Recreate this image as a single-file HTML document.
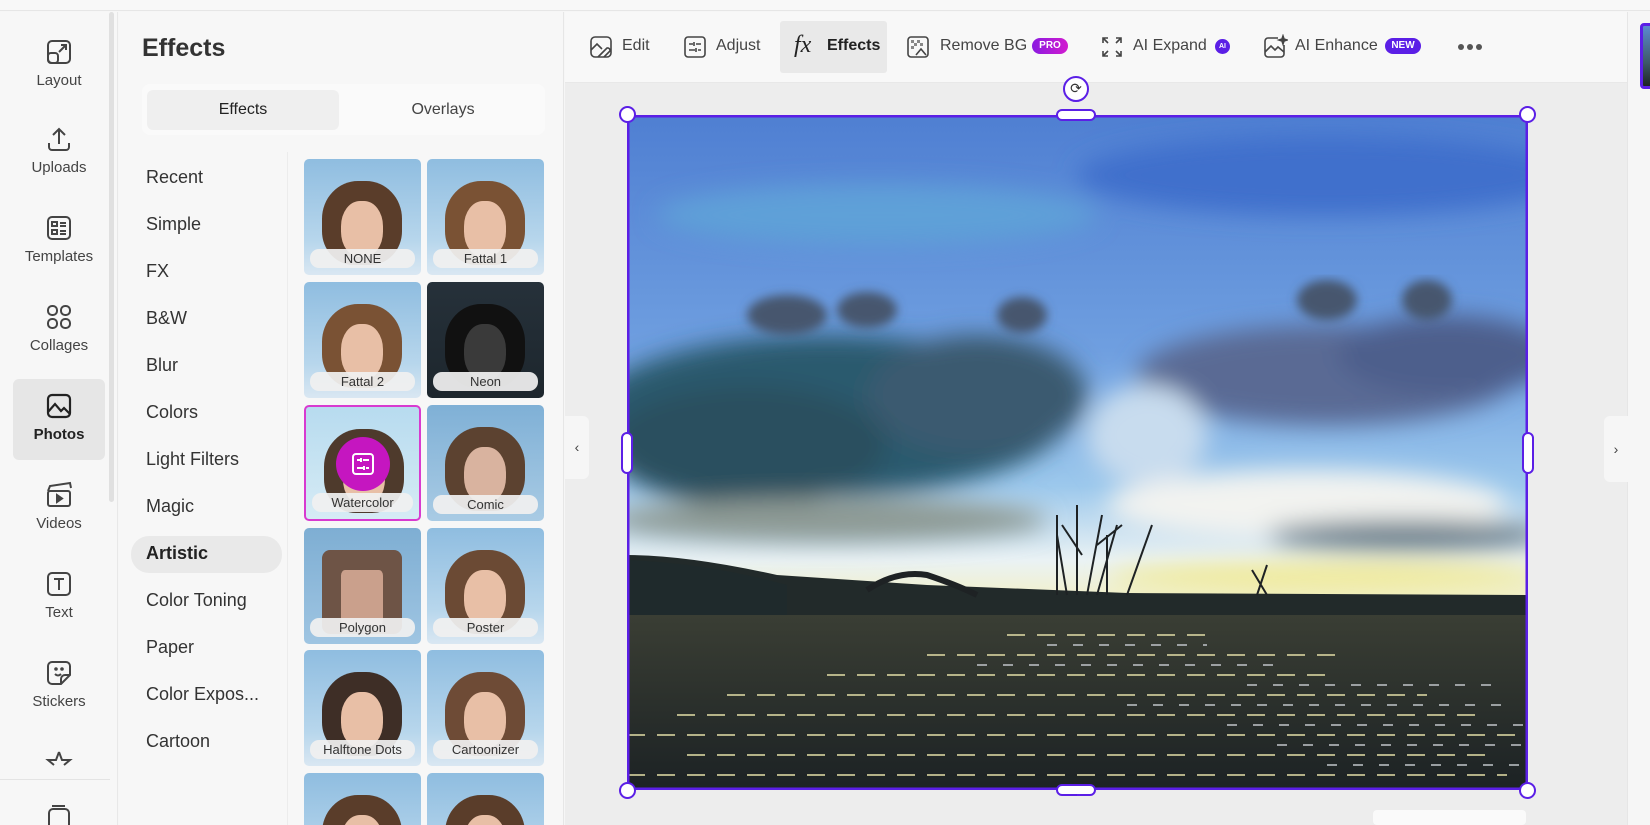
<!DOCTYPE html>
<html><head><meta charset="utf-8"><style>
*{box-sizing:border-box;margin:0;padding:0}
html,body{width:1650px;height:825px;overflow:hidden}
body{background:#f6f6f6;font-family:"Liberation Sans",sans-serif;color:#333}
#wrap{position:relative;width:1650px;height:825px;overflow:hidden}
.abs{position:absolute}
.topline{left:0;top:0;width:1650px;height:11px;background:#f8f8f8;border-bottom:1px solid #e6e6e6}
.side{left:0;top:12px;width:118px;height:813px;background:#f7f7f7;border-right:1px solid #e8e8e8}
.si{position:absolute;left:0;width:118px;text-align:center;font-size:15px;color:#444}
.si svg{display:block;margin:0 auto 6px}
.scroll{left:109px;top:12px;width:5px;height:490px;background:#e0e0e0;border-radius:3px}
.panel{left:119px;top:12px;width:445px;height:813px;background:#f7f7f7;border-right:1px solid #e6e6e6}
.cat{position:absolute;left:146px;font-size:18px;color:#333}
.th{position:absolute;width:117px;height:116px;border-radius:5px;overflow:hidden;background:linear-gradient(180deg,#8fbde0,#b7d6ec 70%,#d9e7f2)}
.th .hair{position:absolute;left:18px;top:22px;width:80px;height:84px;border-radius:45% 45% 40% 40%;background:#5a3d2a}
.th .face{position:absolute;left:37px;top:42px;width:42px;height:56px;border-radius:45%;background:#e8bfa6}
.th .lbl{position:absolute;left:6px;right:6px;bottom:7px;height:19px;border-radius:9px;background:rgba(240,240,240,.93);font-size:13px;text-align:center;line-height:19px;color:#333}
.tb{position:absolute;top:34px;font-size:16px;color:#444;height:24px;line-height:24px}
.badge{position:absolute;color:#fff;font-size:10px;font-weight:bold;text-align:center;border-radius:8px;height:16px;line-height:16px}
.canvas{left:565px;top:83px;width:1062px;height:742px;background:#ededed}
.handle{position:absolute;width:17px;height:17px;border-radius:50%;background:#fff;border:2.5px solid #5b1fe6}
</style></head><body><div id="wrap">
<div class="abs topline"></div>
<div class="abs side"></div>
<div class="abs" style="left:13px;top:379px;width:92px;height:81px;background:#e6e6e6;border-radius:6px"></div>
<div class="abs scroll"></div>

<div class="si" style="top:38px"><svg width="28" height="28" viewBox="0 0 28 28" fill="none" stroke="#444" stroke-width="2"><rect x="3" y="3" width="22" height="22" rx="4"/><rect x="3" y="15" width="10" height="10" rx="3"/><path d="M14 14l7-7M16 7h5v5"/></svg>Layout</div>
<div class="si" style="top:125px"><svg width="28" height="28" viewBox="0 0 28 28" fill="none" stroke="#444" stroke-width="2"><path d="M14 4v15M8 10l6-6 6 6M4 18v4a3 3 0 003 3h14a3 3 0 003-3v-4"/></svg>Uploads</div>
<div class="si" style="top:214px"><svg width="28" height="28" viewBox="0 0 28 28" fill="none" stroke="#444" stroke-width="2"><rect x="3" y="3" width="22" height="22" rx="4"/><rect x="7" y="8" width="5" height="4"/><rect x="7" y="16" width="5" height="4"/><path d="M15 9h6M15 12h6M15 17h6M15 20h6"/></svg>Templates</div>
<div class="si" style="top:303px"><svg width="28" height="28" viewBox="0 0 28 28" fill="none" stroke="#444" stroke-width="2"><rect x="3" y="3" width="9" height="9" rx="4"/><rect x="16" y="3" width="9" height="9" rx="4"/><rect x="3" y="16" width="9" height="9" rx="4"/><rect x="16" y="16" width="9" height="9" rx="4"/></svg>Collages</div>
<div class="si" style="top:392px;color:#222;font-weight:bold"><svg width="28" height="28" viewBox="0 0 28 28" fill="none" stroke="#222" stroke-width="2.2"><rect x="3" y="3" width="22" height="22" rx="4"/><path d="M3 20l7-8 6 7 3-3 6 6"/></svg>Photos</div>
<div class="si" style="top:481px"><svg width="28" height="28" viewBox="0 0 28 28" fill="none" stroke="#444" stroke-width="2"><rect x="3" y="10" width="22" height="15" rx="2"/><path d="M3 10l2-5 20-3 1 5"/><path d="M12 14v7l5-3.5z" fill="#444"/></svg>Videos</div>
<div class="si" style="top:570px"><svg width="28" height="28" viewBox="0 0 28 28" fill="none" stroke="#444" stroke-width="2"><rect x="3" y="3" width="22" height="22" rx="4"/><path d="M9 9h10M14 9v11"/></svg>Text</div>
<div class="si" style="top:659px"><svg width="28" height="28" viewBox="0 0 28 28" fill="none" stroke="#444" stroke-width="2"><path d="M7 3h14a4 4 0 014 4v9l-9 9H7a4 4 0 01-4-4V7a4 4 0 014-4z"/><path d="M16 25v-5a4 4 0 014-4h5M10 15q3 3 6 0"/><circle cx="11" cy="10" r=".8" fill="#444"/><circle cx="17" cy="10" r=".8" fill="#444"/></svg>Stickers</div>
<div class="si" style="top:748px"><svg width="28" height="26" viewBox="0 0 28 26" fill="none" stroke="#444" stroke-width="2"><path d="M14 4l3 8h8l-6 5"/><path d="M14 4l-3 8H3l6 5"/></svg></div>
<div class="abs" style="left:0;top:779px;width:110px;height:1px;background:#e4e4e4"></div>
<div class="si" style="top:803px"><svg width="28" height="28" viewBox="0 0 28 28" fill="none" stroke="#444" stroke-width="2"><rect x="4" y="6" width="20" height="20" rx="4"/><path d="M7 3h13"/></svg></div>

<div class="abs panel"></div>
<div class="abs" style="left:142px;top:34px;font-size:25px;font-weight:bold;color:#333">Effects</div>
<div class="abs" style="left:142px;top:84px;width:403px;height:51px;background:#fafafa;border-radius:8px"></div>
<div class="abs" style="left:147px;top:90px;width:192px;height:40px;background:#efefef;border-radius:6px;text-align:center;line-height:40px;font-size:16px;color:#222">Effects</div>
<div class="abs" style="left:347px;top:90px;width:192px;height:40px;text-align:center;line-height:40px;font-size:16px;color:#444">Overlays</div>
<div class="abs" style="left:287px;top:152px;width:1px;height:673px;background:#ececec"></div>
<div class="abs" style="left:131px;top:536px;width:151px;height:37px;background:#e9e9e9;border-radius:18px"></div>
<div class="cat" style="top:167px">Recent</div>
<div class="cat" style="top:214px">Simple</div>
<div class="cat" style="top:261px">FX</div>
<div class="cat" style="top:308px">B&amp;W</div>
<div class="cat" style="top:355px">Blur</div>
<div class="cat" style="top:402px">Colors</div>
<div class="cat" style="top:449px">Light Filters</div>
<div class="cat" style="top:496px">Magic</div>
<div class="cat" style="top:543px;font-weight:bold;color:#222">Artistic</div>
<div class="cat" style="top:590px">Color Toning</div>
<div class="cat" style="top:637px">Paper</div>
<div class="cat" style="top:684px">Color Expos...</div>
<div class="cat" style="top:731px">Cartoon</div>

<div class="th" style="left:304px;top:159px"><div class="hair"></div><div class="face"></div><div class="lbl">NONE</div></div>
<div class="th" style="left:427px;top:159px"><div class="hair" style="background:#7a5234"></div><div class="face"></div><div class="lbl">Fattal 1</div></div>
<div class="th" style="left:304px;top:282px"><div class="hair" style="background:#7a5234"></div><div class="face"></div><div class="lbl">Fattal 2</div></div>
<div class="th" style="left:427px;top:282px;background:linear-gradient(180deg,#26313a,#1d262d)"><div class="hair" style="background:#111"></div><div class="face" style="background:#3a3a3a"></div><div class="lbl">Neon</div></div>
<div class="th" style="left:304px;top:405px;border:2px solid #d83ad0;background:linear-gradient(180deg,#b7dbef,#d6ebf5)"><div class="hair" style="background:#4e3a2c"></div><div class="face"></div><div style="position:absolute;left:30px;top:30px;width:54px;height:54px;border-radius:50%;background:#c516c0"><svg width="54" height="54" viewBox="0 0 54 54" fill="none" stroke="#fff" stroke-width="2"><rect x="17" y="17" width="20" height="20" rx="3"/><path d="M21 23h3M27 23h6M21 31h6M30 31h3M25 21v4M28 29v4"/></svg></div><div class="lbl">Watercolor</div></div>
<div class="th" style="left:427px;top:405px;background:linear-gradient(180deg,#7fb0d6,#a9cbe4)"><div class="hair" style="background:#5c4230"></div><div class="face" style="background:#d9b39f"></div><div class="lbl">Comic</div></div>
<div class="th" style="left:304px;top:528px;background:linear-gradient(180deg,#7eaed3,#9fc5e2)"><div class="hair" style="background:#6e5446;border-radius:10%"></div><div class="face" style="background:#caa08c;border-radius:10%"></div><div class="lbl">Polygon</div></div>
<div class="th" style="left:427px;top:528px"><div class="hair" style="background:#6b4a34"></div><div class="face"></div><div class="lbl">Poster</div></div>
<div class="th" style="left:304px;top:650px"><div class="hair" style="background:#3e2e26"></div><div class="face"></div><div class="lbl">Halftone Dots</div></div>
<div class="th" style="left:427px;top:650px"><div class="hair" style="background:#6e4b36"></div><div class="face"></div><div class="lbl">Cartoonizer</div></div>
<div class="th" style="left:304px;top:773px"><div class="hair" style="background:#5a3d2a"></div><div class="face"></div></div>
<div class="th" style="left:427px;top:773px"><div class="hair" style="background:#5a3d2a"></div><div class="face"></div></div>

<div class="abs" style="left:565px;top:12px;width:1062px;height:71px;background:#f8f8f8;border-bottom:1px solid #e8e8e8"></div>
<div class="abs" style="left:780px;top:21px;width:107px;height:52px;background:#e9e9e9;border-radius:3px"></div>
<svg class="abs" style="left:589px;top:35px" width="24" height="24" viewBox="0 0 24 24" fill="none" stroke="#444" stroke-width="1.6"><rect x="2" y="2" width="20" height="20" rx="4"/><path d="M2 15l6-6 5 5M9 22l9-9a2.5 2.5 0 013 3l-6 6"/></svg>
<div class="tb" style="left:622px">Edit</div>
<svg class="abs" style="left:683px;top:35px" width="24" height="24" viewBox="0 0 24 24" fill="none" stroke="#444" stroke-width="1.6"><rect x="2" y="2" width="20" height="20" rx="3"/><path d="M6 9h4M13 9h5M6 15h6M15 15h3M11 7v4M13 13v4"/></svg>
<div class="tb" style="left:716px">Adjust</div>
<div class="tb" style="left:794px;top:33px;font-family:'Liberation Serif',serif;font-style:italic;font-size:24px;color:#222">fx</div>
<div class="tb" style="left:827px;color:#222;font-weight:bold">Effects</div>
<svg class="abs" style="left:906px;top:35px" width="24" height="24" viewBox="0 0 24 24" fill="none" stroke="#444" stroke-width="1.6"><rect x="2" y="2" width="20" height="20" rx="3"/><path d="M5 5h3v3H5zM11 5h3v3h-3zM8 8h3v3H8zM5 11h3v3H5zM14 8h3v3h-3z" fill="#888" stroke="none"/><path d="M10 20l5-6 5 6"/></svg>
<div class="tb" style="left:940px">Remove BG</div>
<div class="badge" style="left:1032px;top:38px;width:36px;background:linear-gradient(90deg,#8a1be0,#d21bcf)">PRO</div>
<svg class="abs" style="left:1100px;top:35px" width="24" height="24" viewBox="0 0 24 24" fill="none" stroke="#444" stroke-width="1.6"><path d="M3 8V3h5M3 3l5 5M21 8V3h-5M21 3l-5 5M3 16v5h5M3 21l5-5M21 16v5h-5M21 21l-5-5"/></svg>
<div class="tb" style="left:1133px">AI Expand</div>
<div class="badge" style="left:1215px;top:39px;width:15px;height:15px;line-height:15px;font-size:7px;background:#5b1fe6">AI</div>
<svg class="abs" style="left:1262px;top:34px" width="26" height="26" viewBox="0 0 26 26" fill="none" stroke="#444" stroke-width="1.6"><path d="M16 4H6a3 3 0 00-3 3v13a3 3 0 003 3h13a3 3 0 003-3V11"/><path d="M3 18l6-6 4 4 3-3 6 5"/><path d="M21 2l1 3 3 1-3 1-1 3-1-3-3-1 3-1z" fill="#444"/></svg>
<div class="tb" style="left:1295px">AI Enhance</div>
<div class="badge" style="left:1385px;top:38px;width:36px;background:#5b1fe6">NEW</div>
<div class="abs" style="left:1458px;top:44px;width:6px;height:6px;border-radius:50%;background:#555;box-shadow:9px 0 #555,18px 0 #555"></div>

<div class="abs" style="left:1627px;top:12px;width:1px;height:813px;background:#e6e6e6"></div>
<div class="abs" style="left:1640px;top:23px;width:14px;height:66px;border:3px solid #5b1fe6;border-radius:4px;background:linear-gradient(180deg,#5b8bd0,#3e5a6a 60%,#1e2422)"></div>

<div class="abs canvas"></div>
<div class="abs" style="left:565px;top:416px;width:24px;height:63px;background:#f6f6f6;border-radius:0 6px 6px 0;font-size:14px;text-align:center;line-height:63px;color:#444">‹</div>
<div class="abs" style="left:1604px;top:416px;width:24px;height:66px;background:#f6f6f6;border-radius:6px 0 0 6px;font-size:14px;text-align:center;line-height:66px;color:#444">›</div>
<div class="abs" style="left:1373px;top:810px;width:153px;height:15px;background:#fafafa;border-radius:4px"></div>

<svg class="abs" style="left:627px;top:115px" width="901" height="675" viewBox="0 0 901 675">
<defs>
<linearGradient id="sky" x1="0" y1="0" x2="0" y2="1"><stop offset="0" stop-color="#4f7fd2"/><stop offset=".35" stop-color="#6f9fe0"/><stop offset=".55" stop-color="#9cc8ec"/><stop offset=".66" stop-color="#eaf2f4"/><stop offset=".72" stop-color="#f2f0c8"/></linearGradient>
<linearGradient id="wat" x1="0" y1="0" x2="0" y2="1"><stop offset="0" stop-color="#3a3e34"/><stop offset="1" stop-color="#1c2224"/></linearGradient>
<filter id="b"><feGaussianBlur stdDeviation="12"/></filter>
<filter id="b2"><feGaussianBlur stdDeviation="5"/></filter>
</defs>
<rect width="901" height="675" fill="url(#sky)"/>
<g filter="url(#b)">
<ellipse cx="700" cy="60" rx="250" ry="40" fill="#3f6fcc"/>
<ellipse cx="250" cy="100" rx="220" ry="30" fill="#5fa0d8"/>
<ellipse cx="200" cy="300" rx="240" ry="80" fill="#2c5a6e"/>
<ellipse cx="120" cy="330" rx="140" ry="60" fill="#2a4f5e"/>
<ellipse cx="350" cy="280" rx="110" ry="60" fill="#3a5a70"/>
<ellipse cx="700" cy="260" rx="190" ry="50" fill="#5a6a94"/>
<ellipse cx="820" cy="240" rx="110" ry="40" fill="#4e5e8c"/>
<ellipse cx="520" cy="320" rx="60" ry="50" fill="#c8dcee"/>
<ellipse cx="680" cy="390" rx="200" ry="35" fill="#f2f3f0"/>
<ellipse cx="780" cy="420" rx="140" ry="15" fill="#6a7d88"/>
<ellipse cx="200" cy="405" rx="220" ry="22" fill="#8d9a94"/>
<ellipse cx="700" cy="462" rx="220" ry="15" fill="#f0ea9a"/>
</g>
<g filter="url(#b2)" fill="#46566e">
<ellipse cx="160" cy="200" rx="40" ry="20"/><ellipse cx="240" cy="195" rx="30" ry="18"/><ellipse cx="395" cy="200" rx="25" ry="18"/><ellipse cx="700" cy="185" rx="30" ry="20"/><ellipse cx="800" cy="185" rx="25" ry="20"/>
</g>
<path d="M0 440 Q60 440 150 460 L300 470 L500 478 L901 480 L901 500 L0 505 Z" fill="#222a2a"/>
<path d="M0 445 Q80 448 160 470 L160 500 L0 505Z" fill="#1f2a2c"/>
<g stroke="#1e2224" stroke-width="2" fill="none">
<path d="M430 480V400M440 480l-10-60M450 480V390M460 480l15-80M470 480l20-70M480 480V420M455 440l-20-30M470 430l25-20M500 480l25-70M630 480l10-30M640 480l-15-25"/>
<path d="M240 475q30-20 60-15q30 10 50 20" stroke-width="6"/>
</g>
<rect y="500" width="901" height="175" fill="url(#wat)"/>
<g stroke-width="2" fill="none" opacity=".8">
<path d="M380 520h200M300 540h420M200 560h500M100 580h700M50 600h800M0 620h901M60 640h800M0 660h880" stroke="#d8d4a0" stroke-dasharray="18 12"/>
<path d="M420 530h160M350 550h300M620 570h250M500 590h380M600 610h300M650 630h250M700 650h200" stroke="#b8bcc0" stroke-dasharray="10 16"/>
</g>
<rect x="1" y="1" width="899" height="673" fill="none" stroke="#5b1fe6" stroke-width="3"/>
</svg>
<div class="handle" style="left:619px;top:106px"></div>
<div class="handle" style="left:1519px;top:106px"></div>
<div class="handle" style="left:619px;top:782px"></div>
<div class="handle" style="left:1519px;top:782px"></div>
<div class="abs" style="left:1056px;top:109px;width:40px;height:12px;border-radius:6px;background:#fff;border:2.5px solid #5b1fe6"></div>
<div class="abs" style="left:1056px;top:784px;width:40px;height:12px;border-radius:6px;background:#fff;border:2.5px solid #5b1fe6"></div>
<div class="abs" style="left:621px;top:432px;width:12px;height:42px;border-radius:6px;background:#fff;border:2.5px solid #5b1fe6"></div>
<div class="abs" style="left:1522px;top:432px;width:12px;height:42px;border-radius:6px;background:#fff;border:2.5px solid #5b1fe6"></div>
<div class="abs" style="left:1063px;top:76px;width:26px;height:26px;border-radius:50%;background:#fff;border:2.5px solid #5b1fe6;text-align:center;line-height:20px;font-size:14px;color:#333">⟳</div>
</div></body></html>
